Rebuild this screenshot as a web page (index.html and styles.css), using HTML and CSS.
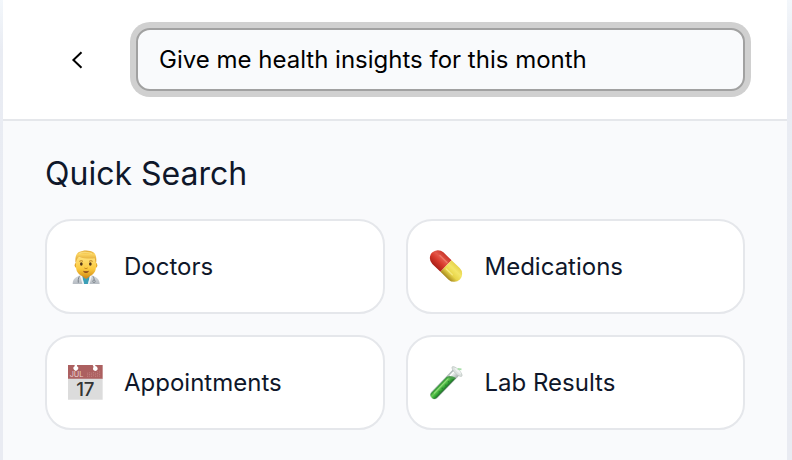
FILE: index.html
```html
<!DOCTYPE html>
<html lang="en">
<head>
<meta charset="utf-8">
<meta name="viewport" content="width=device-width, initial-scale=1">
<title>Health Search</title>
<link rel="stylesheet" href="styles.css">
</head>
<body>
<div class="panel">
  <header class="search-bar">
    <button class="back" type="button" aria-label="Back">
      <svg width="16" height="20" viewBox="0 0 16 20" fill="none" stroke="currentColor" stroke-width="2" aria-hidden="true"><path d="M12.5 2.2 4.4 10l8.1 7.8"/></svg>
    </button>
    <input class="query" type="text" aria-label="Search" value="Give me health insights for this month">
  </header>
  <main class="content">
    <h1 class="title">Quick Search</h1>
    <div class="grid">
      <button class="card" type="button">
        <svg class="icon" viewBox="0 0 108 108" aria-hidden="true">
          <defs>
            <linearGradient id="face" x1="0" y1="0" x2="0" y2="1"><stop offset="0" stop-color="#ffe17a"/><stop offset=".6" stop-color="#fbc93e"/><stop offset="1" stop-color="#d9951b"/></linearGradient>
            <linearGradient id="hair" x1="0" y1="0" x2="0" y2="1"><stop offset="0" stop-color="#e0a52f"/><stop offset=".3" stop-color="#fbd460"/><stop offset="1" stop-color="#d08f20"/></linearGradient>
            <linearGradient id="coat" x1="0" y1="0" x2="0" y2="1"><stop offset="0" stop-color="#d8dce0"/><stop offset="1" stop-color="#b5bbc2"/></linearGradient>
          </defs>
          <path d="M14 105c0-15 8-20 24-27h32c16 7 24 12 25 27z" fill="url(#coat)"/>
          <path d="M43 80h22l-4 25H47z" fill="#3b9fb7"/>
          <path d="M43 76h22l-2 8-9 6-9-6z" fill="#d28d20"/>
          <path d="M39 80 46 105M69 80l-7 25" stroke="#f3f4f6" stroke-width="5"/>
          <path d="M34 82c-3 6-4 12-3 19M75 82c3 4 4 9 3 14" fill="none" stroke="#777f87" stroke-width="3"/>
          <circle cx="78" cy="97" r="4" fill="#b3bac0" stroke="#7c848b" stroke-width="2"/>
          <ellipse cx="24" cy="49" rx="4" ry="7" fill="#e6aa2c"/>
          <ellipse cx="84" cy="49" rx="4" ry="7" fill="#e6aa2c"/>
          <path d="M24 25h60v28c0 20-15 30-30 30S24 73 24 53z" fill="url(#face)"/>
          <path d="M23 43c-2-13-1-28 10-34 14-7 33-6 43 1 10 7 10 22 8 33l-4-15c-14 2-36 0-47-4-6 4-8 10-10 19z" fill="url(#hair)"/>
          <path d="M33 14c11-6 29-5 39 0" fill="none" stroke="#ffe995" stroke-width="4" opacity=".6"/>
          <path d="M34 37q6-4 11 0M63 37q6-4 11 0" fill="none" stroke="#a76c1c" stroke-width="2.5"/>
          <ellipse cx="40" cy="45" rx="4" ry="5" fill="#51351a"/>
          <ellipse cx="67" cy="45" rx="4" ry="5" fill="#51351a"/>
          <path d="M49 57q5 4 10 0" fill="none" stroke="#c98924" stroke-width="3"/>
          <path d="M45 65q9 3 18 0-2 7-9 7t-9-7z" fill="#88451b"/>
        </svg>
        <span>Doctors</span>
      </button>
      <button class="card" type="button">
        <svg class="icon" viewBox="0 0 108 108" aria-hidden="true">
          <defs>
            <linearGradient id="red" x1="0" y1="0" x2="0" y2="1"><stop offset="0" stop-color="#c9362a"/><stop offset=".35" stop-color="#e4584a"/><stop offset=".6" stop-color="#d83a2c"/><stop offset="1" stop-color="#a91f17"/></linearGradient>
            <linearGradient id="yellow" x1="0" y1="0" x2="0" y2="1"><stop offset="0" stop-color="#e6d24c"/><stop offset=".3" stop-color="#f3e668"/><stop offset=".65" stop-color="#e8d548"/><stop offset="1" stop-color="#a6881f"/></linearGradient>
          </defs>
          <g transform="translate(51 51) rotate(44)">
            <path d="M0-24h-34a24 24 0 0 0 0 48H0z" fill="url(#red)"/>
            <path d="M0-24h34a24 24 0 0 1 0 48H0z" fill="url(#yellow)"/>
            <path d="M-35-10H-5" stroke="#ff9d88" stroke-width="4" stroke-linecap="round" opacity=".5"/>
            <path d="M7 6H32" stroke="#fff9b2" stroke-width="4" stroke-linecap="round" opacity=".5"/>
          </g>
        </svg>
        <span>Medications</span>
      </button>
      <button class="card" type="button">
        <svg class="icon" viewBox="0 0 108 108" aria-hidden="true">
          <path d="M0 0h104v42H0z" fill="#ac6060"/>
          <path d="M0 41h104v63H0z" fill="#dcdcdc"/>
          <path d="M20 0h7v4a7 7 0 1 1-7 0zM74 0h7l2 4a7 7 0 1 1-6 2z" fill="#fff"/>
          <text class="month" x="5" y="37">JUL</text>
          <path d="M59 23v13M65 22v14M71 23v13M77 21v15M83 23v13M89 19v17M95 17v19" stroke="#c28181" stroke-width="3" stroke-dasharray="3 2"/>
          <text class="day" x="52" y="94">17</text>
        </svg>
        <span>Appointments</span>
      </button>
      <button class="card" type="button">
        <svg class="icon" viewBox="0 0 108 108" aria-hidden="true">
          <defs>
            <linearGradient id="glass" x1="0" y1="0" x2="0" y2="1"><stop offset="0" stop-color="#a5b1ae"/><stop offset=".4" stop-color="#e6ebe9"/><stop offset="1" stop-color="#a3adaa"/></linearGradient>
            <linearGradient id="liquid" x1="0" y1="0" x2="0" y2="1"><stop offset="0" stop-color="#268b2e"/><stop offset=".35" stop-color="#6ccb58"/><stop offset=".65" stop-color="#3aad39"/><stop offset="1" stop-color="#1c6b27"/></linearGradient>
          </defs>
          <g transform="translate(16 90) rotate(-46)">
            <path d="M0-13h97v26H0a13 13 0 0 1 0-26z" fill="url(#glass)"/>
            <path d="M0-11h66l16 22H0A11 11 0 0 1 0-11z" fill="url(#liquid)"/>
            <path d="M66-11q12 6 16 22-14-4-16-22z" fill="#4f9d51"/>
            <path d="M4-4h58" stroke="#a3e88d" stroke-width="3" stroke-linecap="round" opacity=".7"/>
            <path d="M74-6h17" stroke="#fff" stroke-width="4"/>
            <g fill="#277f30"><circle cx="17" cy="4" r="2"/><circle cx="31" cy="3" r="2"/><circle cx="45" cy="4" r="2"/><circle cx="58" cy="3" r="2"/></g>
            <ellipse cx="98" cy="0" rx="7" ry="20" fill="#dce2df" stroke="#b9c2be" stroke-width="2"/>
            <ellipse cx="101" cy="0" rx="3" ry="13" fill="#eef2f0"/>
            <path d="M105-4 112 5" stroke="#a7dfa8" stroke-width="5"/>
          </g>
        </svg>
        <span>Lab Results</span>
      </button>
    </div>
  </main>
</div>
</body>
</html>
```
FILE: styles.css
```css
* {
  box-sizing: border-box;
}

body {
  margin: 0;
  min-height: 100vh;
  padding: 0 5px 0 3px;
  background: linear-gradient(#f3f7fb, #e9ecf3 50px, #e9ebf2);
  color: #0f172a;
  font-family: Inter, "Liberation Sans", sans-serif;
}

.panel {
  display: flex;
  flex-direction: column;
  min-height: 100vh;
  background: #f9fafc;
}

.search-bar {
  display: flex;
  align-items: center;
  gap: 27px;
  padding: 28px 42px;
  background: #fff;
  border-bottom: 2px solid #e5e7eb;
}

.back {
  display: flex;
  align-items: center;
  justify-content: center;
  width: 64px;
  height: 56px;
  padding: 0;
  border: 0;
  background: none;
  color: #000;
}

.query {
  flex: 1;
  min-width: 0;
  height: 63px;
  padding: 0 21px;
  border: 2px solid #a1a1a1;
  border-radius: 14px;
  outline: 0;
  background: #f9fafc;
  box-shadow: 0 0 0 6px #d0d0d0;
  color: #000;
  font: inherit;
  font-size: 24px;
}

.content {
  padding: 32px 42px 30px;
}

.title {
  margin: 0 0 24px;
  font-size: 32px;
  font-weight: 400;
  line-height: 42px;
}

.grid {
  display: grid;
  grid-template-columns: 1fr 1fr;
  gap: 21px;
}

.card {
  display: flex;
  align-items: center;
  gap: 20px;
  padding: 27px 21px;
  border: 2px solid #e5e7eb;
  border-radius: 26px;
  background: #fff;
  color: inherit;
  font: inherit;
  font-size: 24px;
  line-height: 37px;
  text-align: left;
}

.icon {
  flex: none;
  width: 36px;
  height: 36px;
}

.month {
  fill: #ead0d0;
  font-size: 22px;
}

.day {
  fill: #333;
  font-size: 56px;
  font-weight: 500;
  text-anchor: middle;
}
```
